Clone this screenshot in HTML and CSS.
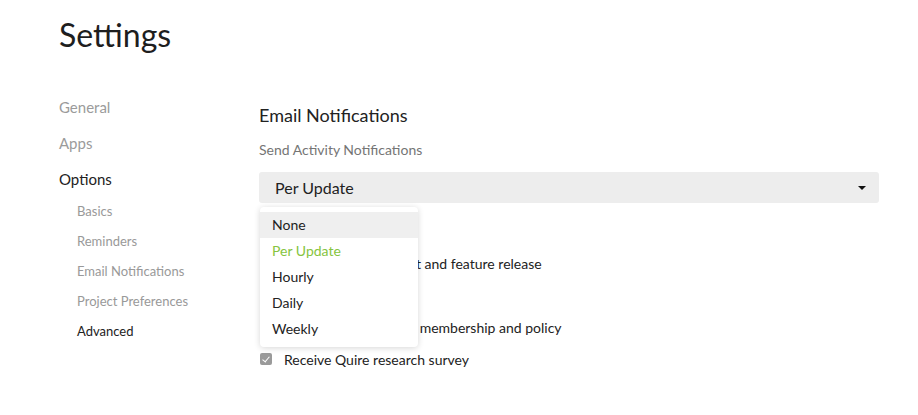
FILE: index.html
```html
<!DOCTYPE html>
<html lang="en">
<head>
<meta charset="utf-8">
<title>Settings</title>
<link rel="stylesheet" href="styles.css">
</head>
<body>
<div class="page">
  <h1 class="page-title">Settings</h1>
  <div class="layout">
    <nav class="sidebar">
      <a class="nav-item">General</a>
      <a class="nav-item">Apps</a>
      <a class="nav-item active">Options</a>
      <div class="subnav">
        <a class="sub-item">Basics</a>
        <a class="sub-item">Reminders</a>
        <a class="sub-item">Email Notifications</a>
        <a class="sub-item">Project Preferences</a>
        <a class="sub-item active">Advanced</a>
      </div>
    </nav>
    <main class="content">
      <h2 class="section-title">Email Notifications</h2>
      <div class="field-label">Send Activity Notifications</div>
      <div class="select-wrap">
        <div class="select">
          <span class="select-value">Per Update</span>
          <span class="caret"></span>
        </div>
        <ul class="menu">
          <li class="menu-item hover">None</li>
          <li class="menu-item selected">Per Update</li>
          <li class="menu-item">Hourly</li>
          <li class="menu-item">Daily</li>
          <li class="menu-item">Weekly</li>
        </ul>
      </div>
      <div class="field-label subscriptions">Quire Updates</div>
      <label class="check-row"><span class="checkbox"></span><span>Receive Quire product and feature release</span></label>
      <div class="field-label group">Account</div>
      <label class="check-row"><span class="checkbox"></span><span>Receive Quire info on membership and policy</span></label>
      <label class="check-row"><span class="checkbox"></span><span>Receive Quire research survey</span></label>
    </main>
  </div>
</div>
</body>
</html>
```

FILE: styles.css
```css
* {
  box-sizing: border-box;
}

body {
  margin: 0;
  background: #fff;
  color: #222;
  font-family: Lato, "Open Sans", sans-serif;
}

.page {
  padding: 16px 39px 0 59px;
}

.page-title {
  margin: 0;
  font-size: 32px;
  line-height: 38px;
  font-weight: 400;
  color: #1e1e1e;
}

.layout {
  display: flex;
  margin-top: 35px;
}

/* left navigation */
.sidebar {
  width: 200px;
  flex: none;
  display: flex;
  flex-direction: column;
}

.nav-item {
  font-size: 15px;
  line-height: 36px;
  color: #9b9b9b;
}

.nav-item.active {
  color: #222;
}

.subnav {
  display: flex;
  flex-direction: column;
  padding-left: 18px;
  margin-top: -1px;
}

.sub-item {
  font-size: 13px;
  line-height: 30px;
  color: #999;
}

.sub-item.active {
  color: #222;
}

/* main panel */
.content {
  flex: 1;
  padding-top: 14px;
}

.section-title {
  margin: 0;
  font-size: 18px;
  line-height: 24px;
  font-weight: 400;
  color: #222;
}

.field-label {
  margin-top: 13px;
  font-size: 14px;
  line-height: 20px;
  color: #757575;
}

.select-wrap {
  position: relative;
  margin-top: 12px;
}

.select {
  display: flex;
  align-items: center;
  justify-content: space-between;
  height: 31px;
  padding: 0 13px 0 16px;
  background: #ededed;
  border-radius: 3px;
}

.select-value {
  font-size: 16px;
  color: #222;
}

.caret {
  width: 0;
  height: 0;
  border-left: 4px solid transparent;
  border-right: 4px solid transparent;
  border-top: 4px solid #111;
}

.menu {
  position: absolute;
  top: 35px;
  left: 1px;
  width: 158px;
  margin: 0;
  padding: 5px 0;
  list-style: none;
  background: #fff;
  border-radius: 4px;
  box-shadow: 0 1px 6px rgba(0, 0, 0, 0.16);
  z-index: 2;
}

.menu-item {
  height: 26px;
  line-height: 26px;
  padding-left: 12px;
  font-size: 14px;
  color: #222;
}

.menu-item.hover {
  background: #efefef;
}

.menu-item.selected {
  color: #86c440;
}

/* group labels sit under the open menu */
.subscriptions,
.group {
  padding-left: 4px;
}

.subscriptions {
  margin-top: 19px;
}

.group {
  margin-top: 6px;
}

.check-row {
  display: flex;
  align-items: center;
  height: 32px;
  font-size: 14px;
  color: #222;
}

.subscriptions + .check-row {
  margin-top: 5px;
}

.group + .check-row {
  margin-top: 6px;
}

.checkbox {
  position: relative;
  width: 12px;
  height: 12px;
  margin: 0 12px 0 1px;
  border-radius: 2px;
  background: #9a9a9a;
}

.checkbox::after {
  content: "";
  position: absolute;
  left: 4px;
  top: 2px;
  width: 3px;
  height: 6px;
  border: solid #fff;
  border-width: 0 1.5px 1.5px 0;
  transform: rotate(40deg);
}
```
